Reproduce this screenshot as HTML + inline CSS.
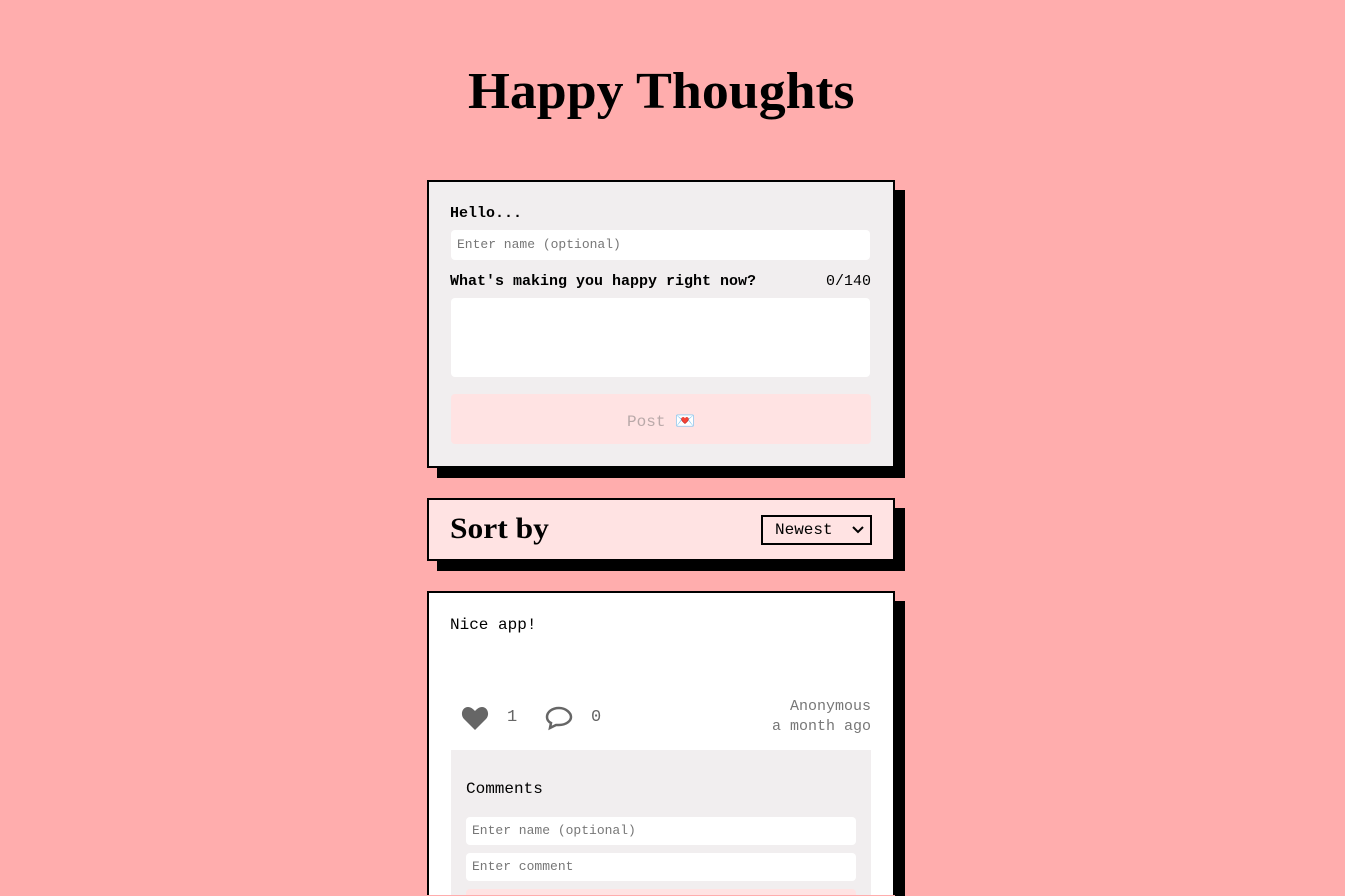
<!DOCTYPE html>
<html style="height:896px;overflow:hidden"><head><meta charset="utf-8"><style>
*{box-sizing:border-box;margin:0;padding:0}
body{width:1345px;height:896px;overflow:hidden;background:#ffadad;font-family:"Liberation Mono",monospace;position:relative}
h1{position:absolute;top:62px;left:468px;width:386px;white-space:nowrap;font-family:"Liberation Serif",serif;font-weight:bold;font-size:52px;color:#000;transform:scaleX(1.035);transform-origin:left}
.card{position:absolute;left:427px;width:468px;border:2px solid #000;box-shadow:10px 10px 0 #000}
.lbl{position:absolute;font-size:15px;font-weight:bold;color:#000}
.inp{position:absolute;background:#fff;border-radius:4px;font-size:13px;color:#777;padding-left:6px}
</style></head><body>
<h1>Happy Thoughts</h1>
<div class="card" style="top:180px;height:288px;background:#f1eeef">
  <div class="lbl" style="left:21px;top:23px">Hello...</div>
  <div class="inp" style="left:22px;top:48px;width:419px;height:30px;line-height:30px">Enter name (optional)</div>
  <div class="lbl" style="left:21px;top:91px">What's making you happy right now?</div>
  <div style="position:absolute;right:22px;top:91px;font-size:15px">0/140</div>
  <div class="inp" style="left:22px;top:116px;width:419px;height:79px"></div>
  <div style="position:absolute;left:22px;top:212px;width:420px;height:50px;background:#ffe3e3;border-radius:4px;text-align:center;line-height:56px;font-size:16px;color:#b9a9a9">Post 💌</div>
</div>
<div class="card" style="top:498px;height:63px;background:#ffe3e3">
  <div style="position:absolute;left:21px;top:12px;font-family:'Liberation Serif',serif;font-weight:bold;font-size:30px;transform:scaleX(1.05);transform-origin:left">Sort by</div>
  <div style="position:absolute;left:332px;top:15px;width:111px;height:30px;border:2px solid #000;font-size:16px;line-height:26px;padding-left:12px">Newest
    <svg style="position:absolute;right:6px;top:8px" width="12" height="9" viewBox="0 0 12 9"><path d="M1 2l5 5 5-5" stroke="#000" stroke-width="2" fill="none"/></svg></div>
</div>
<div style="position:absolute;left:895px;top:601px;width:10px;height:295px;background:#000"></div>
<div class="card" style="top:591px;height:305px;background:#fff;overflow:hidden;border-bottom:none;box-shadow:none;height:304px">
  <div style="position:absolute;left:21px;top:23px;font-size:16px">Nice app!</div>
  <svg style="position:absolute;left:32px;top:113px" width="28" height="25" viewBox="0 0 28 25"><path d="M14 24L3 13C-1 9 1 1 7 1c3 0 5 2 7 4 2-2 4-4 7-4 6 0 8 8 4 12z" fill="#666"/></svg>
  <div style="position:absolute;left:78px;top:115px;font-size:17px;color:#666">1</div>
  <svg style="position:absolute;left:115px;top:113px" width="30" height="25" viewBox="0 0 30 25"><path d="M15 2C8 2 3 6 3 11c0 3 2 5 4 6l-1 5 6-3c1 0 2 0 3 0 7 0 12-4 12-8S22 2 15 2z" stroke="#666" stroke-width="2.5" fill="none"/></svg>
  <div style="position:absolute;left:162px;top:115px;font-size:17px;color:#666">0</div>
  <div style="position:absolute;right:22px;top:104px;font-size:15px;color:#777;text-align:right;line-height:20px">Anonymous<br>a month ago</div>
  <div style="position:absolute;left:22px;top:157px;width:420px;height:146px;overflow:hidden;background:#f1eeef">
    <div style="position:absolute;left:15px;top:30px;font-size:16px">Comments</div>
    <div class="inp" style="left:15px;top:67px;width:390px;height:28px;line-height:28px">Enter name (optional)</div>
    <div class="inp" style="left:15px;top:103px;width:390px;height:28px;line-height:28px">Enter comment</div>
    <div style="position:absolute;left:15px;top:139px;width:390px;height:7px;background:#ffe3e3;border-radius:4px 4px 0 0"></div>
  </div>
</div>
</body></html>
